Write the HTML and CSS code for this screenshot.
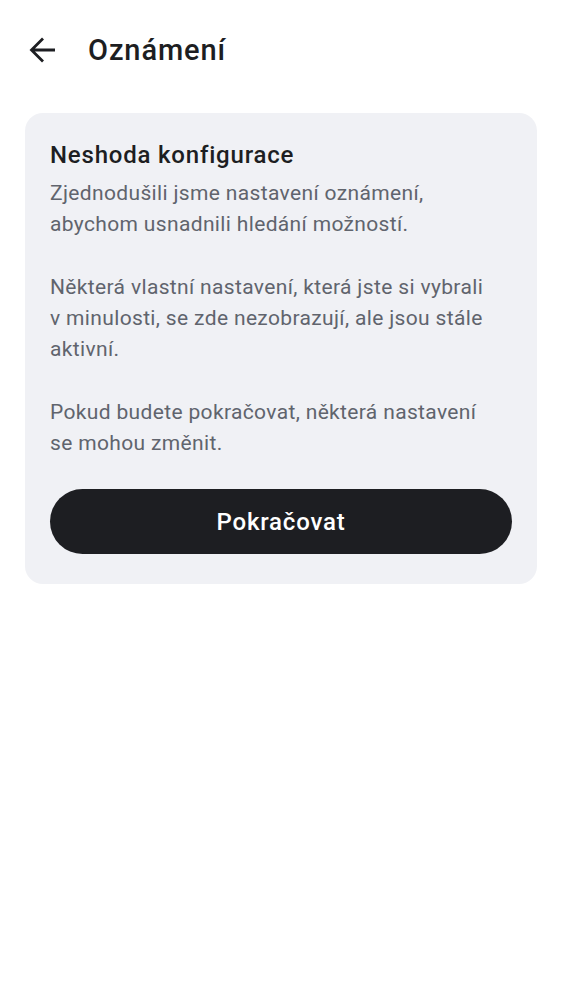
FILE: index.html
```html
<!DOCTYPE html>
<html lang="cs">
<head>
<meta charset="utf-8">
<link rel="stylesheet" href="styles.css">
</head>
<body>
<header class="topbar">
  <svg class="back" width="28" height="28" viewBox="0 0 28 28" aria-hidden="true">
    <path d="M26 14H3M14 2.5L2.5 14L14 25.5" fill="none" stroke="#1d1e22" stroke-width="2.8" stroke-linecap="butt" stroke-linejoin="miter"/>
  </svg>
  <h1 class="title">Oznámení</h1>
</header>
<main class="content">
  <section class="card">
    <h2 class="card-title">Neshoda konfigurace</h2>
    <p class="card-text">Zjednodušili jsme nastavení oznámení, abychom usnadnili hledání možností.</p>
    <p class="card-text">Některá vlastní nastavení, která jste si vybrali v&nbsp;minulosti, se zde nezobrazují, ale jsou stále aktivní.</p>
    <p class="card-text">Pokud budete pokračovat, některá nastavení se mohou změnit.</p>
    <button class="btn">Pokračovat</button>
  </section>
</main>
</body>
</html>
```
FILE: styles.css
```css
* { box-sizing: border-box; }
body {
  margin: 0;
  background: #ffffff;
  font-family: Roboto, "Noto Sans", sans-serif;
  color: #1d1e22;
}
.topbar {
  display: flex;
  align-items: center;
  height: 100px;
  padding: 0 0 0 29px;
}
.back { flex: none; }
.title {
  margin: 0 0 0 31px;
  font-size: 29px;
  font-weight: 500;
  letter-spacing: 0.9px;
  color: #1d1e22;
}
.content {
  padding: 13px 25px 0 25px;
}
.card {
  background: #f0f1f5;
  border-radius: 18px;
  padding: 26px 25px 30px 25px;
  display: flex;
  flex-direction: column;
}
.card-title {
  margin: 0;
  font-size: 24px;
  line-height: 32px;
  font-weight: 500;
  letter-spacing: 0.8px;
  color: #1d1e22;
}
.card-text {
  margin: 7px 0 0 0;
  padding-right: 8px;
  font-size: 21px;
  line-height: 31px;
  letter-spacing: 0.35px;
  color: #60646d;
}
.card-text + .card-text { margin-top: 32px; }
.btn {
  margin-top: 30px;
  height: 65px;
  border: none;
  border-radius: 33px;
  background: #1d1e22;
  color: #ffffff;
  font-family: Roboto, "Noto Sans", sans-serif;
  font-size: 24px;
  font-weight: 500;
  letter-spacing: 0.8px;
}
```
